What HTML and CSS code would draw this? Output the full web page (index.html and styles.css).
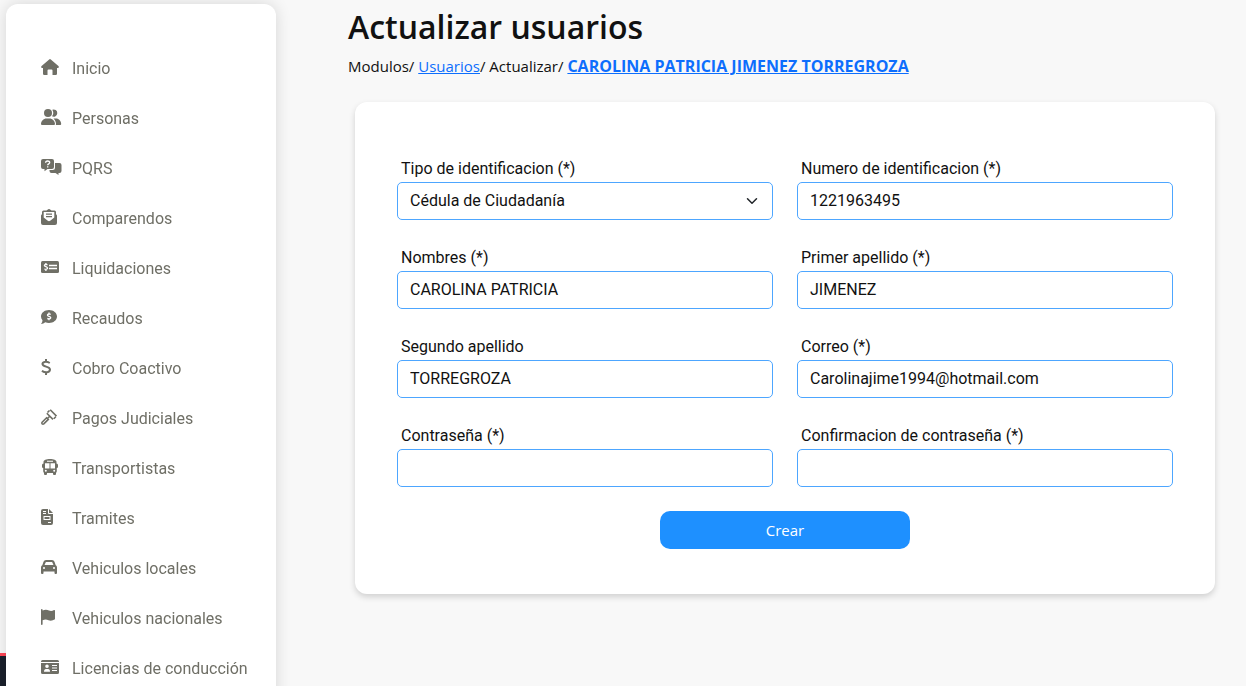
FILE: index.html
```html
<!DOCTYPE html>
<html lang="es">
<head>
<meta charset="UTF-8" />
<meta name="viewport" content="width=device-width, initial-scale=1.0" />
<title>Actualizar usuarios</title>
<link rel="stylesheet" href="styles.css">
</head>
<body>

<div class="user-bar"></div>

<nav class="sidebar">
  <ul class="menu">
    <li><a href="#inicio">
      <svg class="icon" viewBox="0 0 22 16"><path d="M9 0 Q9.400 0 9.800 .4L17.700 7.300Q18.300 8.700 17 9H16V14.700Q16 16 14.700 16H11.500V11.500Q11.500 10.500 10.500 10.500H7.500Q6.500 10.500 6.500 11.500V16H3.300Q2 16 2 14.700V9H1Q-.3 8.700 .3 7.300L8.200 .4Q8.600 0 9 0Z"/></svg>
      <span>Inicio</span></a></li>
    <li><a href="#personas">
      <svg class="icon" viewBox="0 0 22 16"><circle cx="7" cy="4" r="4"/><path d="M0 15C0 12 2.500 9.500 5.500 9.500H8.500C11.500 9.500 14 12 14 15Q14 16 13 16H1Q0 16 0 15ZM11 7.200Q13.400 4 11.300 .7A3.600 3.600 0 1 1 11 7.200ZM12.500 9.500H15C18 9.500 20.200 12 20.200 15Q20.200 16 19.200 16H14.900Q15.500 12.500 12.500 9.500Z"/></svg>
      <span>Personas</span></a></li>
    <li><a href="#pqrs">
      <svg class="icon" viewBox="0 0 22 16"><path d="M2 0H11Q13 0 13 2V8Q13 10 11 10H6.500L3.500 12.200V10H2Q0 10 0 8V2Q0 0 2 0ZM14 4H18.500Q20.500 4 20.500 6V12Q20.500 14 18.500 14H17.500V16L14.500 14H10.500Q8.500 14 8.500 12V11H11.500Q14 11 14 8.500Z"/><path class="cut" d="M4.600 3.800C4.600 1.400 8.700 1.500 8.700 3.600C8.700 5 6.700 4.700 6.700 6.200M6.700 7.300V8.600"/></svg>
      <span>PQRS</span></a></li>
    <li><a href="#comparendos">
      <svg class="icon" viewBox="0 0 22 16"><path fill-rule="evenodd" d="M1 5V3Q1 1.500 2.500 1.500H5.500L7.200 .3Q8 -.2 8.800 .3L10.500 1.500H13.500Q15 1.500 15 3V5L16 6.500V14Q16 16 14 16H2Q0 16 0 14V6.500ZM2.700 3V8.500L6.800 11.800Q8 12.700 9.200 11.800L13.300 8.500V3Z"/><path d="M5 4.500H11V5.700H5ZM5 7H11V8.200H5Z"/></svg>
      <span>Comparendos</span></a></li>
    <li><a href="#liquidaciones">
      <svg class="icon" viewBox="0 0 22 16"><rect y="2" width="18" height="12" rx="1.500"/><path class="cut" d="M6.500 5.800C3.500 4.700 2.200 7 4.800 7.700C7.700 8.500 6.800 11 3.300 10M4.900 4V5.200M4.900 10.500V12M8 6.500H16M8 9.500H16"/></svg>
      <span>Liquidaciones</span></a></li>
    <li><a href="#recaudos">
      <svg class="icon" viewBox="0 0 22 16"><path d="M8 1C12.500 1 16 3.900 16 7.500S12.500 14 8 14Q6 14 4.300 13.300Q2.500 15 0 15Q1.500 13.300 1.500 11.200Q0 9.600 0 7.500C0 3.900 3.500 1 8 1Z"/><path class="cut" d="M9.700 5.300C6.500 4.300 5.300 6.700 8 7.400C10.900 8.200 9.900 10.500 6.300 9.500M8 3.500V4.800M8 10V11.300"/></svg>
      <span>Recaudos</span></a></li>
    <li><a href="#cobro">
      <svg class="icon line" viewBox="0 0 22 16"><path stroke-width="2" d="M8.800 4C5 1.800 1.200 2.900 1.500 5.200C1.900 8.300 9 7 9 10.600C9 13.500 4.500 14.100 .9 11.800M5 0V3M5 13V16"/></svg>
      <span>Cobro Coactivo</span></a></li>
    <li><a href="#pagos">
      <svg class="icon line" viewBox="0 0 22 16"><path stroke-width="1.600" d="M9.200 .8L15.500 7.100M5.800 4.200L12 10.400M8.500 1.500L6.500 3.500M14.800 7.800L12.800 9.800M6.100 9.200L7.300 10.400L2.800 14.900Q2 15.500 1.200 14.900Q.4 14.100 1.100 13.300L5.600 8.800ZM7 9L8.500 7.500"/></svg>
      <span>Pagos Judiciales</span></a></li>
    <li><a href="#transportistas">
      <svg class="icon" viewBox="0 0 22 16"><path fill-rule="evenodd" d="M9 0C12.700 0 15.500 1 15.500 3V4.500Q17 4.500 17 6V8Q17 9 15.800 9V12Q15.800 13.500 15 13.700V15Q15 16 14 16H13Q12 16 12 15V14H6V15Q6 16 5 16H4Q3 16 3 15V13.700Q2.200 13.500 2.200 12V9Q1 9 1 8V6Q1 4.500 2.500 4.500V3C2.500 1 5.300 0 9 0ZM6 1.800H12V2.800H6ZM4 4.200H8.500V9.500H4ZM9.500 4.200H14V9.500H9.500ZM4.800 10.800A1 1 0 1 0 4.810 12.800A1 1 0 1 0 4.800 10.800ZM13.200 10.800A1 1 0 1 0 13.210 12.800A1 1 0 1 0 13.200 10.800Z"/></svg>
      <span>Transportistas</span></a></li>
    <li><a href="#tramites">
      <svg class="icon" viewBox="0 0 22 16"><path fill-rule="evenodd" d="M2 0H7V4Q7 5 8 5H12V14Q12 16 10 16H2Q0 16 0 14V2Q0 0 2 0ZM8 0L12 4H8ZM2 2V3H5V2ZM2 4V5H5V4ZM2.500 7V11H9.500V7ZM7 13V14H10V13Z"/><path d="M3.500 8H8.500V10H3.500Z"/></svg>
      <span>Tramites</span></a></li>
    <li><a href="#locales">
      <svg class="icon" viewBox="0 0 22 16"><path fill-rule="evenodd" d="M5 1H11Q12.900 1 13.500 2.700L14.700 6.200Q16 6.800 16 8.500V14Q16 15 15 15H14.500Q13.500 15 13.500 14V12.500H2.500V14Q2.500 15 1.500 15H1Q0 15 0 14V8.500Q0 6.800 1.300 6.200L2.500 2.700Q3.100 1 5 1ZM4.900 3L3.500 6H12.500L11.100 3ZM3 8A1 1 0 1 0 3.010 10A1 1 0 1 0 3 8ZM13 8A1 1 0 1 0 13.010 10A1 1 0 1 0 13 8Z"/></svg>
      <span>Vehiculos locales</span></a></li>
    <li><a href="#nacionales">
      <svg class="icon" viewBox="0 0 22 16"><path d="M0 1Q0 0 .8 0T1.600 1V1.500Q5 0 8 1.500Q10.500 2.500 13 1Q14 .7 14 1.700V10.200Q10.500 12.500 7.500 11.200Q4.500 10 1.600 11.300V15Q1.600 16 .8 16T0 15Z"/></svg>
      <span>Vehiculos nacionales</span></a></li>
    <li><a href="#licencias">
      <svg class="icon" viewBox="0 0 22 16"><path fill-rule="evenodd" d="M0 3V2.500Q0 1 1.500 1H16.500Q18 1 18 2.500V3ZM0 4H18V13.500Q18 15 16.500 15H1.500Q0 15 0 13.500ZM6 5.500A1.800 1.800 0 1 0 6.010 9.100A1.800 1.800 0 1 0 6 5.500ZM3 12.800H9Q9 10 7 10H5Q3 10 3 12.800ZM11 6V7H16V6ZM11 8.500V9.500H16V8.500ZM11 11V12H16V11Z"/></svg>
      <span>Licencias de conducción</span></a></li>
  </ul>
</nav>

<main class="content">
  <h1>Actualizar usuarios</h1>
  <p class="breadcrumb">Modulos/ <a href="#usuarios">Usuarios</a>/ Actualizar/ <a class="current" href="#usuario">CAROLINA PATRICIA JIMENEZ TORREGROZA</a></p>

  <form class="card">
    <div class="fields">
      <div class="field">
        <label for="tipo">Tipo de identificacion (*)</label>
        <div class="select-wrap">
          <select id="tipo">
            <option>Cédula de Ciudadanía</option>
          </select>
          <svg class="chevron" viewBox="0 0 16 16"><path d="M2 5l6 6 6-6"/></svg>
        </div>
      </div>
      <div class="field">
        <label for="numero">Numero de identificacion (*)</label>
        <input type="text" id="numero" value="1221963495">
      </div>
      <div class="field">
        <label for="nombres">Nombres (*)</label>
        <input type="text" id="nombres" value="CAROLINA PATRICIA">
      </div>
      <div class="field">
        <label for="apellido1">Primer apellido (*)</label>
        <input type="text" id="apellido1" value="JIMENEZ">
      </div>
      <div class="field">
        <label for="apellido2">Segundo apellido</label>
        <input type="text" id="apellido2" value="TORREGROZA">
      </div>
      <div class="field">
        <label for="correo">Correo (*)</label>
        <input type="email" id="correo" value="Carolinajime1994@hotmail.com">
      </div>
      <div class="field">
        <label for="clave">Contraseña (*)</label>
        <input type="password" id="clave">
      </div>
      <div class="field">
        <label for="clave2">Confirmacion de contraseña (*)</label>
        <input type="password" id="clave2">
      </div>
    </div>
    <button type="submit">Crear</button>
  </form>
</main>

</body>
</html>
```
FILE: styles.css
```css
:root {
  --bg: #f8f8f8;
  --text: #111;
  --menu: #6f6f66;
  --link: #0d6efd;
  --blue: #1e90ff;
  --font-title: "Segoe UI", "Open Sans", sans-serif;
  --font-body: Roboto, sans-serif;
}

* { box-sizing: border-box; }

body {
  margin: 0;
  height: 100vh;
  overflow: hidden;
  display: flex;
  align-items: flex-start;
  background: var(--bg);
  color: var(--text);
  font-family: var(--font-body);
  font-size: 16px;
  line-height: 24px;
}

/* dark bar that stays behind the menu */
.user-bar {
  position: fixed;
  left: 0;
  bottom: 0;
  width: 250px;
  height: 33px;
  background: #1a202c;
  border-top: 3px solid #ff4757;
}

.sidebar {
  position: relative;
  flex: 0 0 270px;
  margin: 4px 0 0 6px;
  padding: 40px 0 20px 35px;
  background: #fff;
  border-radius: 12px;
  box-shadow: 0 0 16px rgba(0, 0, 0, 0.14);
}

.menu {
  list-style: none;
  margin: 0;
  padding: 0;
}

.menu a {
  display: flex;
  align-items: center;
  gap: 9px;
  height: 50px;
  color: var(--menu);
  text-decoration: none;
}

.icon {
  width: 22px;
  height: 16px;
  margin-bottom: 4px;
  fill: var(--menu);
  overflow: visible;
}
.icon .cut { fill: none; stroke: #fff; stroke-width: 1.3; }
.icon.line { fill: none; stroke: var(--menu); }

.content {
  flex: 1;
  min-width: 0;
  padding: 5px 31px 0 72px;
}

h1 {
  margin: 0 0 5px;
  font-family: var(--font-title);
  font-size: 32px;
  font-weight: 600;
  line-height: 44px;
}

.breadcrumb {
  margin: 0 0 24px;
  font-family: var(--font-title);
  font-size: 15px;
}
.breadcrumb a { color: var(--link); }
.breadcrumb .current {
  font-size: 16px;
  font-weight: bold;
}

.card {
  margin-left: 7px;
  padding: 55px 42px 45px;
  background: #fff;
  border-radius: 12px;
  box-shadow: 0 3px 6px rgba(0, 0, 0, 0.16);
}

.fields {
  display: grid;
  grid-template-columns: 1fr 1fr;
  gap: 26px 24px;
}

.field label {
  display: block;
  margin: 0 0 1px 4px;
}

.field input,
.field select {
  display: block;
  width: 100%;
  height: 38px;
  padding: 0 12px 2px;
  border: 1px solid #4da6ff;
  border-radius: 5px;
  background: #fff;
  color: var(--text);
  font-family: var(--font-body);
  font-size: 16px;
  appearance: none;
}

.select-wrap { position: relative; }
.chevron {
  position: absolute;
  right: 15px;
  top: 13px;
  width: 12px;
  height: 12px;
  fill: none;
  stroke: #212529;
  stroke-width: 2;
  stroke-linecap: round;
  stroke-linejoin: round;
  pointer-events: none;
}

button {
  display: block;
  width: 250px;
  height: 38px;
  margin: 24px auto 0;
  border: none;
  border-radius: 10px;
  background: var(--blue);
  color: #fff;
  font-family: var(--font-title);
  font-size: 15px;
  cursor: pointer;
}
```
